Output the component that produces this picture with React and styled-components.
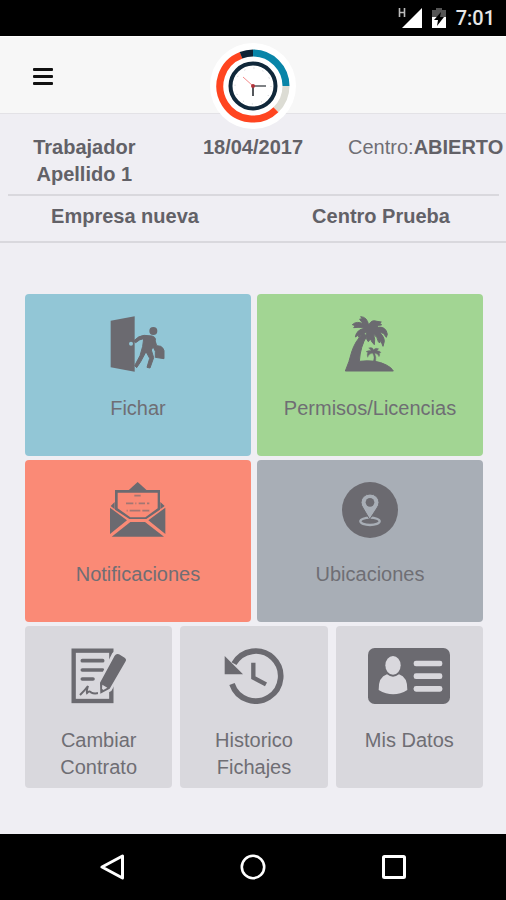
import React from 'react'

import styled, { createGlobalStyle } from 'styled-components'

const colors = {
    page: '#efeef3',
    bar: '#f7f7f7',
    line: '#d9d8dd',
    text: '#626167',
    label: '#6f6e74',
    icon: '#6b6a70',
    blue: '#92c6d6',
    green: '#a2d593',
    red: '#fa8a76',
    slate: '#a8aeb6',
    grey: '#d9d8dd',
}

const GlobalStyle = createGlobalStyle`
    * {
        box-sizing: border-box;
    }

    body {
        margin: 0;
        background: ${colors.page};
        font-family: "Liberation Sans", Arial, sans-serif;
        font-size: 20px;
        line-height: 27px;
        color: ${colors.text};
    }
`

const Screen = styled.div`
    min-height: 100vh;
    display: flex;
    flex-direction: column;
`

const StatusBar = styled.div`
    height: 36px;
    padding: 0 11px;
    display: flex;
    align-items: center;
    justify-content: flex-end;
    gap: 10px;
    background: black;
    color: #e6e6e6;
    font-family: Roboto, sans-serif;
    font-weight: 500;
`

const Header = styled.header`
    position: relative;
    height: 78px;
    padding: 2px 28px 0;
    display: flex;
    align-items: center;
    background: ${colors.bar};
    border-top: 1px solid white;
    border-bottom: 1px solid #e3e2e6;
`

const MenuButton = styled.button`
    padding: 5px;
    display: flex;
    border: 0;
    background: none;
    color: #111;
    cursor: pointer;
`

const Logo = styled.svg`
    position: absolute;
    top: 6px;
    left: 50%;
    transform: translateX(-50%);
`

const InfoRow = styled.div`
    display: grid;
    text-align: center;
    font-weight: bold;
`

const WorkerRow = styled(InfoRow)`
    grid-template-columns: repeat(3, minmax(0, 1fr));
    padding: 20px 0 6px;
`

const CompanyRow = styled(InfoRow)`
    grid-template-columns: repeat(2, minmax(0, 1fr));
    column-gap: 6px;
    padding: 7px 0 11px;
    border-bottom: 2px solid ${colors.line};
`

const Divider = styled.hr`
    width: auto;
    height: 2px;
    margin: 0 7px 0 8px;
    border: 0;
    background: ${colors.line};
`

const CentreState = styled.div`
    padding-left: 8px;
    white-space: nowrap;
    font-weight: normal;
    color: ${colors.label};

    b {
        color: ${colors.text};
    }
`

const Menu = styled.main`
    flex: 1;
    padding: 51px 23px 46px 25px;
    display: flex;
    flex-direction: column;
    gap: 4px;
`

const TileRow = styled.div`
    display: flex;
    gap: ${props => props.$gap}px;
`

const Tile = styled.button`
    flex: 1 1 0;
    min-width: 0;
    min-height: 162px;
    padding: 22px 28px 6px;
    display: flex;
    flex-direction: column;
    align-items: center;
    gap: 23px;
    border: 0;
    border-radius: 4px;
    background: ${props => props.$color};
    color: ${colors.label};
    font: inherit;
    cursor: pointer;
`

const TileIcon = styled.svg`
    flex: none;
    height: 56px;
    color: ${colors.icon};
`

const NavBar = styled.nav`
    height: 66px;
    padding: 0 42px;
    display: grid;
    grid-template-columns: repeat(3, 1fr);
    place-items: center;
    background: black;
`

const NavButton = styled.button`
    padding: 8px;
    display: flex;
    border: 0;
    background: none;
    color: white;
    cursor: pointer;
`

const DoorIcon = () => (
    <TileIcon viewBox="30 33 168 168" fill="currentColor" aria-hidden="true">
        <path d="M32 47 L104 34 V200 L32 187 Z" />
        <circle cx="93" cy="116" r="6" fill={colors.blue} />
        <circle cx="160" cy="78" r="12" />
        <g stroke="currentColor" strokeWidth="3" strokeLinejoin="round">
            <path d="M101 108 Q116 92 132 91 L156 93 Q168 96 166 107 L163 119 L154 135 L161 158 L150 189 L141 187 L149 160 L138 140 L122 170 L110 188 L104 182 L120 152 L128 124 L131 101 Q119 102 107 113 Z" />
            <path d="M160 103 Q168 109 170 122 L182 124 Q190 128 192 137 V161 L166 157 V139 Q158 127 157 112 Z" />
        </g>
    </TileIcon>
)

const PalmIcon = () => (
    <TileIcon viewBox="36 33 168 168" fill="currentColor" stroke="currentColor" strokeWidth="3" strokeLinejoin="round" aria-hidden="true">
        <path d="M46 198 Q58 170 65 141 Q75 108 99 86 L111 92 Q91 123 88 169 Q137 163 169 180 Q184 187 190 198 Z" />
        <path d="M116 61 Q112 36 92 35 L97 42 L89 42 L93 49 L104 58 Q80 46 67 59 L76 62 L71 68 L84 67 Q93 66 104 70 Q80 73 76 96 L84 91 L87 97 L93 89 L98 93 Q100 84 111 81 Q105 99 115 110 L121 102 L126 111 L133 119 L134 104 L131 88 Q143 96 145 110 L149 114 L152 106 L159 124 L163 109 Q162 92 147 82 L160 85 L169 97 L172 88 L169 78 Q160 62 140 68 L146 61 L155 60 L149 54 L154 51 L141 49 Q124 42 116 61 Z" />
        <path d="M130 169 Q135 156 128 145 Q117 145 113 157 Q110 150 113 142 L108 140 Q116 135 123 137 Q121 132 116 129 Q127 125 131 134 Q137 127 146 131 L141 137 Q151 137 153 143 L148 144 Q151 151 147 155 Q142 145 134 145 Q140 157 137 171 Z" strokeWidth="1" />
    </TileIcon>
)

const MailIcon = () => (
    <TileIcon viewBox="30 36 168 168" fill="currentColor" aria-hidden="true">
        <path d="M84 62 L113 36 L142 62 Z" />
        <path d="M45 60 H180 V119 L139 147 H88 L45 119 Z M53 68 V115 L91 142 H136 L173 115 V68 Z" fillRule="evenodd" />
        <path d="M44 96 V118 L32 108 Z M181 96 V118 L194 108 Z" />
        <path d="M30 113 L81 151 L30 192 Z M196 113 L145 151 L196 192 Z" />
        <path d="M35 200 L91 156 H135 L192 200 Z" />
        <path d="M103 77 H122 M78 100 H100 M106 100 H109 M116 100 H135 M141 100 H148 M80 122 H83 M89 122 H121 M127 122 H148" stroke="currentColor" strokeWidth="5" opacity="0.6" />
    </TileIcon>
)

const PlaceIcon = () => (
    <TileIcon viewBox="36 36 168 168" aria-hidden="true">
        <circle cx="120" cy="120" r="84" fill="currentColor" />
        <ellipse cx="120" cy="154" rx="29" ry="11" fill="none" stroke={colors.slate} strokeWidth="7" />
        <path d="M119 148 L99 114 Q93 106 93 97 A27 25 0 0 1 147 97 Q147 106 141 114 Z" fill={colors.slate} stroke={colors.icon} strokeWidth="3" />
        <circle cx="120" cy="97" r="13" fill="currentColor" />
    </TileIcon>
)

const ContractIcon = () => (
    <TileIcon viewBox="46 39 168 168" aria-hidden="true">
        <rect x="54" y="47" width="113" height="151" fill="none" stroke="currentColor" strokeWidth="13" />
        <path d="M80 77 H141 M80 105 H141 M80 132 H112" stroke="currentColor" strokeWidth="11" strokeLinecap="round" />
        <path d="M73 180 Q89 164 97 153 Q92 168 94 174 Q102 166 107 173 Q115 177 130 174" fill="none" stroke="currentColor" strokeWidth="6" />
        <path d="M176 58 Q181 51 190 54 L207 64 Q214 70 209 78 L162 163 L134 177 L133 143 Z" fill="currentColor" stroke={colors.grey} strokeWidth="14" />
        <path d="M177 62 Q182 54 190 58 L207 68 Q214 73 209 80 L162 161 L134 176 L133 143 Z" fill="currentColor" />
        <path d="M140 149 L155 158 L143 165 L139 161 Z" fill={colors.grey} />
    </TileIcon>
)

const HistoryIcon = () => (
    <TileIcon viewBox="40 39 180 168" aria-hidden="true">
        <path d="M70 86 A75 75 0 1 1 64 147" fill="none" stroke="currentColor" strokeWidth="17" />
        <path d="M42 63 L97 118 H42 Z" fill="currentColor" />
        <path d="M128 83 V128 L166 148" fill="none" stroke="currentColor" strokeWidth="13" />
    </TileIcon>
)

const IdCardIcon = () => (
    <TileIcon viewBox="25 39 246 168" aria-hidden="true">
        <rect x="25" y="39" width="246" height="168" rx="20" fill="currentColor" />
        <g fill={colors.grey}>
            <ellipse cx="100" cy="91" rx="23" ry="28" />
            <path d="M82 118 Q100 132 118 118 Q144 126 143 165 Q101 191 57 165 Q56 126 82 118 Z" />
            <rect x="162" y="77" width="86" height="17" rx="7" />
            <rect x="162" y="115" width="86" height="17" rx="7" />
            <rect x="162" y="153" width="86" height="17" rx="7" />
        </g>
    </TileIcon>
)

const ClockLogo = () => (
    <Logo width="86" height="86" viewBox="-43 -43 86 86" role="img" aria-label="Reloj">
        <circle r="43" fill="white" />
        <g fill="none" strokeWidth="7">
            <path d="M0 -33 A33 33 0 0 1 33 0" stroke="#0885a8" />
            <path d="M33 0 A33 33 0 0 1 22.9 23.7" stroke="#dcdcd4" />
            <path d="M22.9 23.7 A33 33 0 1 1 -11.8 -30.8" stroke="#ff4520" />
            <path d="M-12 -30.7 A33 33 0 0 1 0 -33" stroke="#0f2436" />
        </g>
        <circle r="22.5" fill="white" stroke="#10283a" strokeWidth="4" />
        <circle r="18" fill="none" stroke="#c4c8cc" strokeWidth="1" strokeDasharray="1 8.42" />
        <path d="M0 0 L-10 -9" stroke="#f58a8a" strokeWidth="1" />
        <path d="M0 0 H13" stroke="#55585c" strokeWidth="1.5" />
        <path d="M0 0 V10" stroke="#55585c" strokeWidth="2" />
        <circle r="2" fill="#b0333a" />
    </Logo>
)

const mainTiles = [
    [
        { name: 'Fichar', color: colors.blue, Icon: DoorIcon },
        { name: 'Permisos/Licencias', color: colors.green, Icon: PalmIcon },
    ],
    [
        { name: 'Notificaciones', color: colors.red, Icon: MailIcon },
        { name: 'Ubicaciones', color: colors.slate, Icon: PlaceIcon },
    ],
    [
        { name: 'Cambiar Contrato', color: colors.grey, Icon: ContractIcon },
        { name: 'Historico Fichajes', color: colors.grey, Icon: HistoryIcon },
        { name: 'Mis Datos', color: colors.grey, Icon: IdCardIcon },
    ],
]

const App = () => (
    <Screen>
        <GlobalStyle />
        <StatusBar>
            <svg width="24" height="20" viewBox="0 0 24 20" aria-hidden="true">
                <path d="M1.5 0 V9 M6.5 0 V9 M1.5 4.5 H6.5" stroke="#bbb" strokeWidth="1.6" />
                <path d="M24 0 V20 H4 Z" fill="white" />
            </svg>
            <svg width="14" height="20" viewBox="0 0 14 20" aria-hidden="true">
                <path d="M4 0 H10 V2 H14 V10 H0 V2 H4 Z" fill="#555" />
                <path d="M0 9 H14 V20 H0 Z" fill="white" />
                <path d="M9 4 L2 12 H6 L5 18 L12 9 H8 Z" fill="black" />
            </svg>
            <span>7:01</span>
        </StatusBar>
        <Header>
            <MenuButton aria-label="Menú">
                <svg width="20" height="17" viewBox="0 0 20 17" fill="currentColor">
                    <rect width="20" height="3" rx="1" />
                    <rect y="7" width="20" height="3" rx="1" />
                    <rect y="14" width="20" height="3" rx="1" />
                </svg>
            </MenuButton>
            <ClockLogo />
        </Header>
        <section>
            <WorkerRow>
                <div>Trabajador<br />Apellido 1</div>
                <div>18/04/2017</div>
                <CentreState>Centro:<b>ABIERTO</b></CentreState>
            </WorkerRow>
            <Divider />
            <CompanyRow>
                <div>Empresa nueva</div>
                <div>Centro Prueba</div>
            </CompanyRow>
        </section>
        <Menu>
            {mainTiles.map((row, i) => (
                <TileRow key={i} $gap={row.length > 2 ? 8 : 6}>
                    {row.map(({ name, color, Icon }) => (
                        <Tile key={name} $color={color}>
                            <Icon />
                            <span>{name}</span>
                        </Tile>
                    ))}
                </TileRow>
            ))}
        </Menu>
        <NavBar>
            <NavButton aria-label="Atrás">
                <svg width="26" height="26" viewBox="0 0 26 26" fill="none" stroke="currentColor" strokeWidth="3">
                    <path d="M23.5 2 V24 L3 13 Z" strokeLinejoin="round" />
                </svg>
            </NavButton>
            <NavButton aria-label="Inicio">
                <svg width="26" height="26" viewBox="0 0 26 26" fill="none" stroke="currentColor" strokeWidth="2.6">
                    <circle cx="13" cy="13" r="11.2" />
                </svg>
            </NavButton>
            <NavButton aria-label="Recientes">
                <svg width="26" height="26" viewBox="0 0 26 26" fill="none" stroke="currentColor" strokeWidth="3">
                    <rect x="2.5" y="2.5" width="21" height="21" rx="1" />
                </svg>
            </NavButton>
        </NavBar>
    </Screen>
)

export default App
